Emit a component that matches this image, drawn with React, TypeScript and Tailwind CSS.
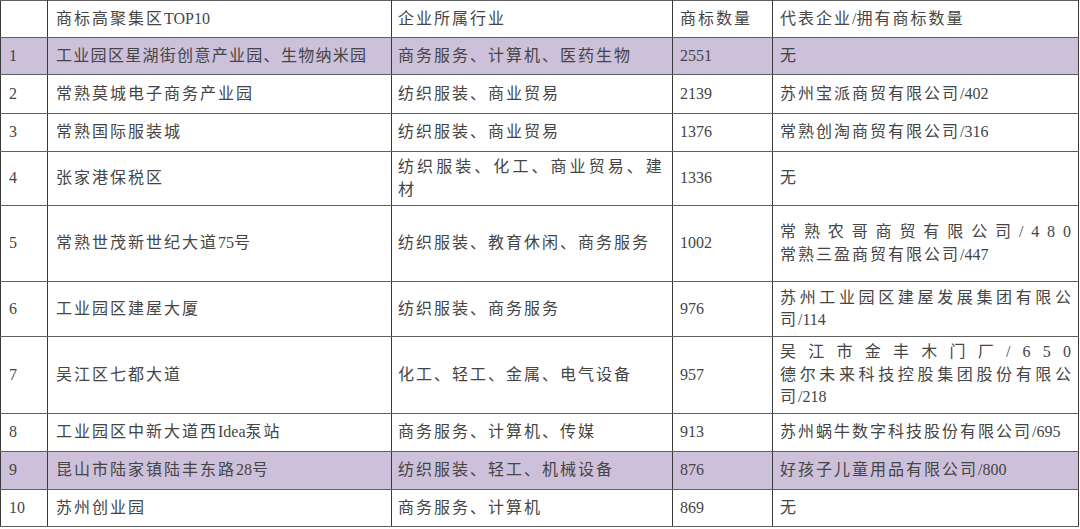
import React from 'react';

type Cell = React.ReactNode;

// Latin runs (digits, slashes, "Idea") sit tight, only the CJK glyphs get the wide tracking
function T({ text }: { text: string }) {
  const parts = text.split(/([\x00-\x7f]+)/).filter(Boolean);
  return (
    <>
      {parts.map((p, i) =>
        /^[\x00-\x7f]+$/.test(p) ? (
          <span key={i} className="tracking-normal">{p}</span>
        ) : (
          <span key={i}>{p}</span>
        ),
      )}
    </>
  );
}

// Spread a line across the full cell width, like the justified lines of the source doc
function Spread({ text }: { text: string }) {
  return (
    <div className="flex justify-between">
      {Array.from(text).map((ch, i) => (
        <span key={i}>{ch}</span>
      ))}
    </div>
  );
}

const rows: { no: string; zone: Cell; industry: Cell; count: string; company: Cell; h: string; hl?: boolean }[] = [
  {
    no: '1',
    zone: <span className="tracking-[1.3px]">工业园区星湖街创意产业园、生物纳米园</span>,
    industry: '商务服务、计算机、医药生物',
    count: '2551',
    company: '无',
    h: 'h-[37px]',
    hl: true,
  },
  { no: '2', zone: '常熟莫城电子商务产业园', industry: '纺织服装、商业贸易', count: '2139', company: <T text="苏州宝派商贸有限公司/402" />, h: 'h-[39px]' },
  { no: '3', zone: '常熟国际服装城', industry: '纺织服装、商业贸易', count: '1376', company: <T text="常熟创淘商贸有限公司/316" />, h: 'h-[38px]' },
  {
    no: '4',
    zone: '张家港保税区',
    industry: (
      <>
        <Spread text="纺织服装、化工、商业贸易、建" />
        <div>材</div>
      </>
    ),
    count: '1336',
    company: '无',
    h: 'h-[54px]',
  },
  {
    no: '5',
    zone: <T text="常熟世茂新世纪大道75号" />,
    industry: '纺织服装、教育休闲、商务服务',
    count: '1002',
    company: (
      <>
        <Spread text="常熟农哥商贸有限公司/480" />
        <div><T text="常熟三盈商贸有限公司/447" /></div>
      </>
    ),
    h: 'h-[76px]',
  },
  {
    no: '6',
    zone: '工业园区建屋大厦',
    industry: '纺织服装、商务服务',
    count: '976',
    company: (
      <>
        <Spread text="苏州工业园区建屋发展集团有限公" />
        <div><T text="司/114" /></div>
      </>
    ),
    h: 'h-[55px]',
  },
  {
    no: '7',
    zone: '吴江区七都大道',
    industry: '化工、轻工、金属、电气设备',
    count: '957',
    company: (
      <>
        <Spread text="吴江市金丰木门厂/650" />
        <Spread text="德尔未来科技控股集团股份有限公" />
        <div><T text="司/218" /></div>
      </>
    ),
    h: 'h-[77px]',
  },
  { no: '8', zone: <T text="工业园区中新大道西Idea泵站" />, industry: '商务服务、计算机、传媒', count: '913', company: <T text="苏州蜗牛数字科技股份有限公司/695" />, h: 'h-[38px]' },
  { no: '9', zone: <T text="昆山市陆家镇陆丰东路28号" />, industry: '纺织服装、轻工、机械设备', count: '876', company: <T text="好孩子儿童用品有限公司/800" />, h: 'h-[38px]', hl: true },
  { no: '10', zone: '苏州创业园', industry: '商务服务、计算机', count: '869', company: '无', h: 'h-[37px]' },
];

const td = 'border-x border-x-[#3a3a3a] border-y border-y-[#606060] align-middle';

export default function App() {
  return (
    <div className="w-[1080px] h-[529px] bg-white overflow-hidden">
      <table className="table-fixed border-collapse w-[1078px] text-[16px] leading-[22.5px] tracking-[2px] text-[#454545] font-['Liberation_Serif','Noto_Sans_CJK_SC',serif]">
        <colgroup>
          <col className="w-[47px]" />
          <col className="w-[344px]" />
          <col className="w-[281px]" />
          <col className="w-[100px]" />
          <col className="w-[306px]" />
        </colgroup>
        <thead>
          <tr className="h-[37px]">
            <th className={`${td} font-normal`} />
            <th className={`${td} font-normal text-left pl-[8px]`}><T text="商标高聚集区TOP10" /></th>
            <th className={`${td} font-normal text-left px-[6px]`}>企业所属行业</th>
            <th className={`${td} font-normal text-left px-[7px]`}>商标数量</th>
            <th className={`${td} font-normal text-left px-[7px]`}><T text="代表企业/拥有商标数量" /></th>
          </tr>
        </thead>
        <tbody>
          {rows.map((r) => (
            <tr key={r.no} className={`${r.h} ${r.hl ? 'bg-[#ccc0da]' : ''}`}>
              <td className={`${td} pl-[8px] tracking-normal`}>{r.no}</td>
              <td className={`${td} pl-[8px]`}>{r.zone}</td>
              <td className={`${td} pl-[6px] pr-[8px]`}>{r.industry}</td>
              <td className={`${td} px-[7px] tracking-normal`}>{r.count}</td>
              <td className={`${td} pl-[7px] pr-[5px]`}>{r.company}</td>
            </tr>
          ))}
        </tbody>
      </table>
    </div>
  );
}
